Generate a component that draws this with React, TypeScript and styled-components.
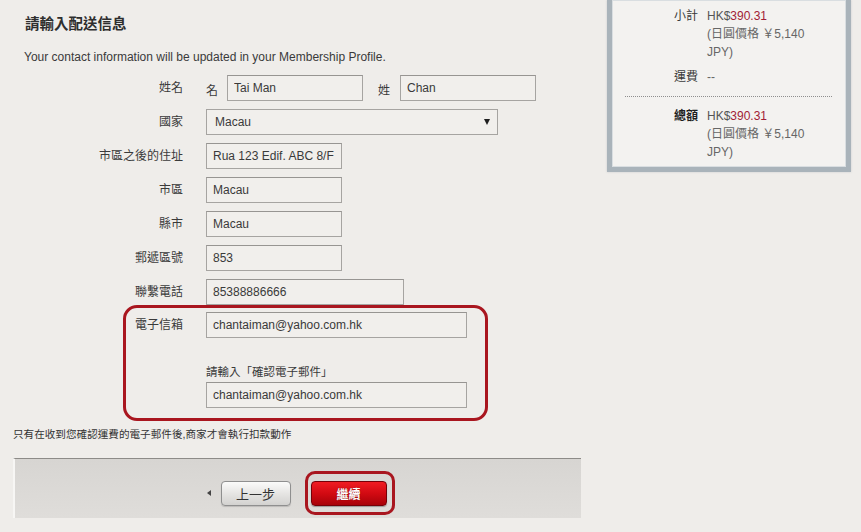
import React from 'react';
import styled, { createGlobalStyle } from 'styled-components';

const Global = createGlobalStyle`
  html, body {
    margin: 0;
    padding: 0;
    background: #efedea;
    font-family: "Liberation Sans", "Noto Sans CJK TC", sans-serif;
    color: #3a3a3a;
  }
`;

const Page = styled.div`
  display: flex;
  align-items: flex-start;
  width: 861px;
  height: 532px;
  overflow: hidden;
`;

const Main = styled.div`
  width: 595px;
  flex-shrink: 0;
  display: flex;
  flex-direction: column;
`;

const Title = styled.h2`
  margin: 15px 0 0 25px;
  font-size: 14.5px;
  line-height: 18px;
  font-weight: bold;
  color: #2e2e2e;
`;

const Intro = styled.p`
  margin: 16px 0 0 24px;
  font-size: 12px;
  line-height: 16px;
  color: #3a3a3a;
`;

const Rows = styled.div`
  margin-top: 10px;
  display: flex;
  flex-direction: column;
  gap: 8px;
`;

const Row = styled.div<{ $labelWidth?: number }>`
  display: grid;
  grid-template-columns: ${(p) => p.$labelWidth ?? 183}px auto;
  column-gap: 23px;
  align-items: center;
`;

const Label = styled.span`
  text-align: right;
  font-size: 12px;
  line-height: 16px;
  color: #3a3a3a;
  white-space: nowrap;
`;

const Field = styled.input<{ $w: number }>`
  box-sizing: border-box;
  width: ${(p) => p.$w}px;
  height: 26px;
  margin: 0;
  padding: 0 6px;
  border: 1px solid #a6a4a1;
  border-top-color: #979592;
  background: #f1efec;
  font-family: "Liberation Sans", sans-serif;
  font-size: 12px;
  color: #3a3a3a;
  outline: none;
`;

const NameGroup = styled.div`
  display: flex;
  align-items: flex-end;
`;

const SubLabel = styled.span<{ $gap: number }>`
  font-size: 12px;
  line-height: 14px;
  padding-bottom: 3px;
  margin-right: ${(p) => p.$gap}px;
  color: #3a3a3a;
`;

const NameField = styled(Field)`
  margin-right: 15px;
`;

const Select = styled.div`
  box-sizing: border-box;
  width: 292px;
  height: 26px;
  display: flex;
  align-items: center;
  justify-content: space-between;
  padding: 0 7px 0 8px;
  border: 1px solid #a6a4a1;
  background: #f1efec;
  font-size: 12px;
  color: #3a3a3a;
`;

const Caret = styled.span`
  width: 0;
  height: 0;
  border-left: 3.5px solid transparent;
  border-right: 3.5px solid transparent;
  border-top: 6px solid #1e1e1e;
`;

const Highlight = styled.div`
  box-sizing: border-box;
  margin-left: 123px;
  width: 365px;
  padding: 4px 0 10px;
  border: 3px solid #a9161f;
  border-radius: 14px;
  display: grid;
  grid-template-columns: 57px auto;
  column-gap: 23px;
  align-items: center;
`;

const ConfirmLabel = styled.span`
  grid-column: 2;
  margin-top: 26px;
  font-size: 11.5px;
  line-height: 16px;
  color: #3a3a3a;
`;

const ConfirmField = styled(Field)`
  grid-column: 2;
  margin-top: 2px;
`;

const Note = styled.p`
  margin: 5px 0 0 13px;
  font-size: 10.6px;
  line-height: 16px;
  color: #333;
  white-space: nowrap;
`;

const Footer = styled.div`
  box-sizing: border-box;
  margin: 16px 0 0 13px;
  width: 568px;
  height: 60px;
  padding: 12px 0 0 5px;
  border-top: 1px solid #8d8b88;
  border-left: 2px solid #f7f6f4;
  background: linear-gradient(#d7d5d2, #dfddda);
  display: flex;
  justify-content: center;
  align-items: flex-start;
`;

const ButtonGroup = styled.div`
  display: flex;
  align-items: center;
  height: 44px;
`;

const BackArrow = styled.span`
  width: 0;
  height: 0;
  border-top: 3px solid transparent;
  border-bottom: 3px solid transparent;
  border-right: 4px solid #444;
  margin-right: 10px;
`;

const BackButton = styled.button`
  box-sizing: border-box;
  width: 70px;
  height: 25px;
  border: 1px solid #8f8f8f;
  border-radius: 4px;
  background: linear-gradient(#fbfbfa, #e4e3e1 55%, #d3d2d0);
  box-shadow: 0 1px 1px rgba(0, 0, 0, 0.15);
  font-family: "Noto Sans CJK TC", sans-serif;
  font-size: 13px;
  color: #333;
  padding: 0;
  margin-right: 14px;
`;

const Ring = styled.div`
  box-sizing: border-box;
  width: 90px;
  height: 44px;
  padding: 7px 5px 6px 3px;
  border: 3px solid #a9161f;
  border-radius: 10px;
`;

const NextButton = styled.button`
  box-sizing: border-box;
  width: 76px;
  height: 25px;
  border: 1px solid #760008;
  border-radius: 4px;
  background: linear-gradient(#f01c22, #d20a12 50%, #a80209);
  box-shadow: 0 1px 1px rgba(0, 0, 0, 0.3);
  font-family: "Noto Sans CJK TC", sans-serif;
  font-weight: bold;
  font-size: 12px;
  color: #fff;
  text-shadow: 0 0 1px rgba(90, 0, 0, 0.8);
  padding: 0;
`;

const Side = styled.aside`
  box-sizing: border-box;
  margin-left: 12px;
  width: 244px;
  padding: 7px 0 6px;
  border: 5px solid #a9b3ba;
  border-top: none;
  box-shadow: inset 0 0 0 1px #d9dee1, 0 0 2px rgba(120, 130, 140, 0.3);
  background: #f3f2f0;
  font-size: 12px;
`;

const SumRow = styled.div<{ $top?: number }>`
  display: grid;
  grid-template-columns: 86px 110px;
  column-gap: 9px;
  margin-top: ${(p) => p.$top ?? 0}px;
  line-height: 18px;
`;

const SumLabel = styled.span<{ $strong?: boolean }>`
  text-align: right;
  color: ${(p) => (p.$strong ? '#1e1e1e' : '#3a3a3a')};
  font-weight: ${(p) => (p.$strong ? 'bold' : 'normal')};
`;

const SumValue = styled.span`
  color: #666;
`;

const Currency = styled.span`
  color: #555;
`;

const Amount = styled.span`
  color: #a11d35;
`;

const Divider = styled.hr`
  margin: 10px 14px 10px 13px;
  border: none;
  border-top: 1px dotted #8e8e8e;
  height: 0;
`;

function Price() {
  return (
    <SumValue>
      <Currency>HK$</Currency>
      <Amount>390.31</Amount>
      <br />
      (日圓價格 ￥5,140 JPY)
    </SumValue>
  );
}

export default function App() {
  const fields = [
    { label: '市區之後的住址', value: 'Rua 123 Edif. ABC 8/F', width: 136 },
    { label: '市區', value: 'Macau', width: 136 },
    { label: '縣市', value: 'Macau', width: 136 },
    { label: '郵遞區號', value: '853', width: 136 },
    { label: '聯繫電話', value: '85388886666', width: 198 },
  ];

  return (
    <>
      <Global />
      <Page>
        <Main>
          <Title>請輸入配送信息</Title>
          <Intro>Your contact information will be updated in your Membership Profile.</Intro>
          <Rows>
            <Row>
              <Label>姓名</Label>
              <NameGroup>
                <SubLabel $gap={9}>名</SubLabel>
                <NameField $w={136} readOnly value="Tai Man" />
                <SubLabel $gap={10}>姓</SubLabel>
                <Field $w={136} readOnly value="Chan" />
              </NameGroup>
            </Row>
            <Row>
              <Label>國家</Label>
              <Select>
                <span>Macau</span>
                <Caret />
              </Select>
            </Row>
            {fields.map((f) => (
              <Row key={f.label}>
                <Label>{f.label}</Label>
                <Field $w={f.width} readOnly value={f.value} />
              </Row>
            ))}
          </Rows>
          <Highlight>
            <Label>電子信箱</Label>
            <Field $w={261} readOnly value="chantaiman@yahoo.com.hk" />
            <ConfirmLabel>請輸入「確認電子郵件」</ConfirmLabel>
            <ConfirmField $w={261} readOnly value="chantaiman@yahoo.com.hk" />
          </Highlight>
          <Note>只有在收到您確認運費的電子郵件後,商家才會執行扣款動作</Note>
          <Footer>
            <ButtonGroup>
              <BackArrow />
              <BackButton>上一步</BackButton>
              <Ring>
                <NextButton>繼續</NextButton>
              </Ring>
            </ButtonGroup>
          </Footer>
        </Main>
        <Side>
          <SumRow>
            <SumLabel>小計</SumLabel>
            <Price />
          </SumRow>
          <SumRow $top={7}>
            <SumLabel>運費</SumLabel>
            <SumValue>--</SumValue>
          </SumRow>
          <Divider />
          <SumRow>
            <SumLabel $strong>總額</SumLabel>
            <Price />
          </SumRow>
        </Side>
      </Page>
    </>
  );
}
